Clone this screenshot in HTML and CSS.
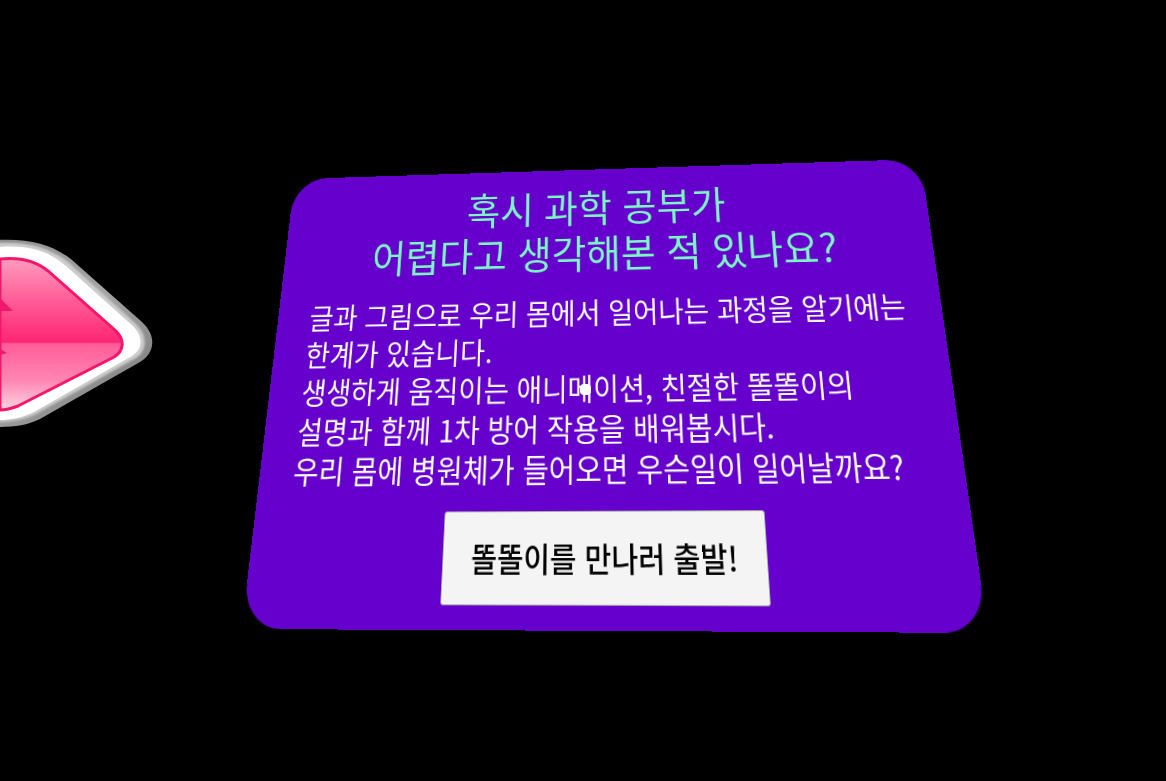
FILE: index.html

```html
<!DOCTYPE html>
<html lang="ko">
<head>
  <meta charset="UTF-8" />
  <title>똑똑이</title>
  <link rel="stylesheet" href="styles.css">
</head>
<body>
  <svg class="arrow" width="170" height="220" viewBox="0 220 170 220">
    <defs>
      <linearGradient id="rim" x1="0" y1="240" x2="150" y2="400" gradientUnits="userSpaceOnUse">
        <stop offset="0" stop-color="#8c8c8c" />
        <stop offset="0.5" stop-color="#a4a4a4" />
        <stop offset="1" stop-color="#7e7e7e" />
      </linearGradient>
      <linearGradient id="face" x1="0" y1="258" x2="0" y2="411" gradientUnits="userSpaceOnUse">
        <stop offset="0" stop-color="#ff9cc0" />
        <stop offset="0.28" stop-color="#ff5c96" />
        <stop offset="0.55" stop-color="#ff2574" />
        <stop offset="0.56" stop-color="#ff5c98" />
        <stop offset="0.8" stop-color="#ff86b2" />
        <stop offset="1" stop-color="#ffd6e4" />
      </linearGradient>
      <filter id="soft" x="-10%" y="-10%" width="120%" height="120%">
        <feGaussianBlur stdDeviation="0.8" />
      </filter>
    </defs>
    <path fill="url(#rim)" d="M-6 240C30 238 52 244 72 260L142 322C156 335 156 352 140 362L40 419C26 426 12 427 -6 427Z" />
    <path fill="#cdcdcd" filter="url(#soft)" d="M-6 243C27 241 49 247 68 262L136 324C148 336 147 351 136 358L36 414C24 420 10 422 -6 422Z" />
    <path fill="#fff" d="M0 247C26 245 48 250 66 266L134 327C144 338 142 350 132 356L34 412C22 418 10 420 0 420Z" />
    <path fill="url(#face)" stroke="#f5166b" stroke-width="3" d="M0 259C20 257 36 261 48 271L116 331C125 340 124 351 114 357L18 406C10 409 4 410 0 410Z" />
    <path fill="#f0186a" d="M0 298L13 311H0Z" />
    <path fill="#f0186a" d="M0 355L7 353L0 349Z" />
  </svg>

  <section class="panel">
    <h1>혹시 과학 공부가&nbsp;<br>어렵다고 생각해본 적 있나요?</h1>
    <p>
      글과 그림으로 우리 몸에서 일어나는 과정을 알기에는<br>
      한계가 있습니다.<br>
      생생하게 움직이는 애니메이션, 친절한 똘똘이의<br>
      설명과 함께 1차 방어 작용을 배워봅시다.<br>
      우리 몸에 병원체가 들어오면 우슨일이 일어날까요?
    </p>
    <button class="start">똘똘이를 만나러 출발!</button>
  </section>

  <div class="cursor"></div>
</body>
</html>
```

FILE: styles.css

```css
html, body {
  margin: 0;
  height: 100%;
  background: #000;
  overflow: hidden;
}
body {
  font-family: "Noto Sans CJK KR", "Noto Sans", sans-serif;
  position: relative;
}
.arrow {
  position: absolute;
  left: 0;
  top: 220px;
}
/* panel is tilted in 3d, matrix worked out from its four corners */
.panel {
  position: absolute;
  left: 0;
  top: 0;
  box-sizing: border-box;
  width: 800px;
  height: 500px;
  padding: 18px 40px 0;
  background: #6600cc;
  border-radius: 44px;
  transform-origin: 0 0;
  transform: matrix3d(0.72563, -0.034813, 0, -0.00006165,
                      -0.18206, 0.7023, 0, -0.00031398,
                      0, 0, 1, 0,
                      294.7, 179.1, 0, 1);
}
.panel h1 {
  margin: 0;
  color: #7df5c5;
  font-size: 46.5px;
  font-weight: 400;
  line-height: 56px;
  text-align: center;
}
.panel p {
  margin: 22px 0 0;
  color: #fff;
  font-size: 32.8px;
  font-weight: 400;
  line-height: 42.5px;
  white-space: nowrap;
}
.start {
  display: block;
  width: 358px;
  height: 91px;
  margin: 21px auto 0;
  padding: 0;
  border: 1px solid #aaa;
  border-radius: 3px;
  background: #f4f4f4;
  color: #000;
  font-family: inherit;
  font-size: 32px;
  font-weight: 500;
}
.cursor {
  position: absolute;
  left: 580px;
  top: 384px;
  width: 11px;
  height: 11px;
  border-radius: 4px;
  background: #fff;
}
```
